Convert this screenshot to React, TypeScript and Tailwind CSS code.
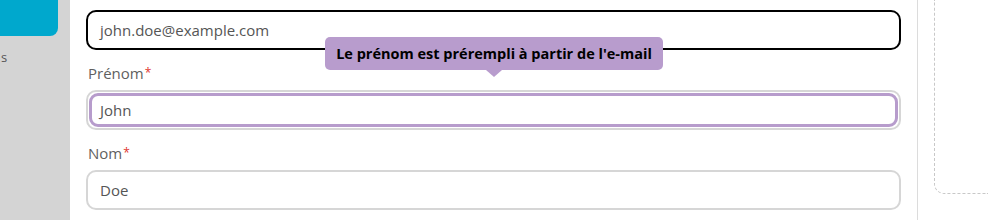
import React from "react";

const font = { fontFamily: '"Open Sans", "Liberation Sans", sans-serif' };

const Label = ({ text }: { text: string }) => (
  <div className="h-[20px] mb-[8px] text-[15px] leading-[22px] text-[#5f5f5f] pl-[2px]">
    {text}
    <span className="text-[#e0342f] ml-[1px] text-[12px] align-top">*</span>
  </div>
);

const App = () => {
  return (
    <div
      className="flex w-[988px] h-[220px] overflow-hidden bg-white"
      style={font}
    >
      {/* sidebar */}
      <div className="w-[70px] shrink-0 bg-[#d4d4d4] flex flex-col">
        <div className="w-[58px] h-[36px] bg-[#00a8cd] rounded-br-[8px]" />
        <div className="mt-[13px] ml-[1px] text-[13px] leading-[16px] text-[#555]">
          s
        </div>
      </div>

      {/* main form */}
      <div className="w-[848px] shrink-0 border-r border-[#dcdcdc] px-[16px] pt-[10px]">
        <div className="h-[40px] rounded-[10px] border-2 border-black flex items-center px-[12px] text-[15px] text-[#555]">
          john.doe@example.com
        </div>

        <div className="relative mt-[12px]">
          <Label text="Prénom" />
          <div className="h-[40px] rounded-[10px] border-2 border-[#d6d6d6] p-[1px]">
            <div className="h-full rounded-[9px] border-[3px] border-[#b79ccc] flex items-center px-[8px] text-[15px] text-[#555]">
              John
            </div>
          </div>

          <div className="absolute left-[239px] top-[-25px] w-[338px] h-[33px] rounded-[5px] bg-[#b89ccd] flex items-center justify-center text-[14.5px] font-bold text-black">
            Le prénom est prérempli à partir de l'e-mail
            <div className="absolute left-[161px] bottom-[-7px] w-0 h-0 border-l-[8px] border-r-[8px] border-t-[7px] border-l-transparent border-r-transparent border-t-[#b89ccd]" />
          </div>
        </div>

        <div className="mt-[12px]">
          <Label text="Nom" />
          <div className="h-[40px] rounded-[10px] border-2 border-[#d6d6d6] flex items-center px-[12px] text-[15px] text-[#555]">
            Doe
          </div>
        </div>
      </div>

      {/* right panel */}
      <div className="flex-1 pl-[16px]">
        <div className="h-[194px] border-l border-b border-dashed border-[#c8c8c8] rounded-bl-[10px]" />
      </div>
    </div>
  );
};

export default App;
